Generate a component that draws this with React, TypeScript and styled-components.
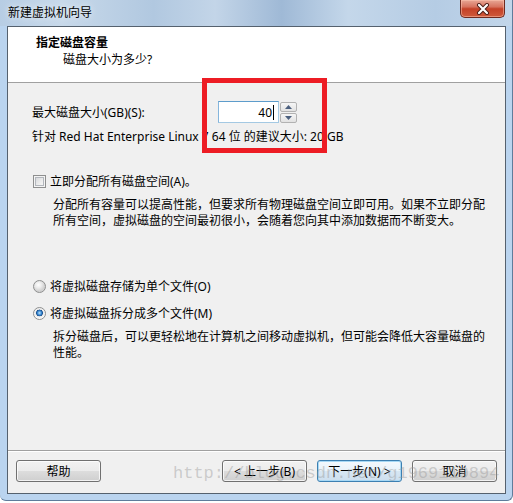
import React from "react";
import styled, { createGlobalStyle } from "styled-components";

const FONT = `"Noto Sans", "Noto Sans CJK SC", sans-serif`;

const Global = createGlobalStyle`
  html, body { margin: 0; padding: 0; background: #ffffff; }
  body { font-family: ${FONT}; font-size: 12px; color: #000; }
`;

const Window = styled.div`
  width: 513px;
  height: 501px;
  box-sizing: border-box;
  display: flex;
  flex-direction: column;
  padding: 0 6px 6px 7px;
  border-right: 1px solid #5f7c9b;
  border-bottom: 1px solid #5f7c9b;
  border-radius: 0 0 6px 6px;
  background:
    linear-gradient(to right, #b7cde4 0%, #c8d9ea 12%, #b1c8e0 30%, #c3d5e8 42%, #9fb9d6 55%, #c4d7ea 68%, #b5cce4 85%, #c2d6ea 100%) top left / 100% 26px no-repeat,
    #bad4ef;
`;

const TitleBar = styled.div`
  height: 26px;
  display: flex;
  align-items: flex-start;
  justify-content: space-between;
`;

const TitleText = styled.div`
  line-height: 26px;
  padding-left: 1px;
  font-size: 12px;
  color: #000;
  text-shadow: 0 0 6px rgba(255, 255, 255, 0.9);
`;

const CloseButton = styled.div`
  width: 45px;
  height: 18px;
  margin-right: 1px;
  box-sizing: border-box;
  border: 1px solid #6e2a20;
  border-top: none;
  border-radius: 0 0 5px 5px;
  background: linear-gradient(#e8a795 0%, #d7735f 40%, #c44127 52%, #cf5a3c 100%);
  box-shadow: inset 0 0 0 1px rgba(255, 200, 180, 0.5);
  display: flex;
  align-items: center;
  justify-content: center;
`;

const Client = styled.div`
  flex: 1;
  display: flex;
  flex-direction: column;
  border: 1px solid #55616e;
  background: #f0f0f0;
  position: relative;
`;

const Header = styled.div`
  height: 56px;
  box-sizing: border-box;
  border-bottom: 1px solid #a0a0a0;
  background: #ffffff;
  padding: 7px 0 0 28px;
`;

const HeaderTitle = styled.div`
  font-weight: bold;
  line-height: 17px;
`;

const HeaderSub = styled.div`
  line-height: 17px;
  padding-left: 27px;
`;

const Body = styled.div`
  flex: 1;
  position: relative;
  display: flex;
  flex-direction: column;
  padding: 18px 0 0 24px;
`;

const SizeRow = styled.div`
  display: flex;
  align-items: center;
  height: 22px;
`;

const SizeLabel = styled.div`
  width: 186px;
  line-height: 17px;
`;

const NumberBox = styled.div`
  width: 61px;
  height: 22px;
  box-sizing: border-box;
  border: 1px solid #a4c9e3;
  border-top-color: #5d9ccb;
  border-left-color: #84b5dc;
  background: #fff;
  display: flex;
  align-items: center;
  justify-content: flex-end;
  padding-right: 4px;
  line-height: 17px;
`;

const Caret = styled.span`
  display: inline-block;
  width: 1px;
  height: 15px;
  background: #000;
  margin-left: 1px;
`;

const Spinner = styled.div`
  margin-left: 1px;
  width: 17px;
  height: 21px;
  display: flex;
  flex-direction: column;
  gap: 1px;
  align-self: flex-end;
`;

const SpinButton = styled.div`
  flex: 1;
  box-sizing: border-box;
  border: 1px solid #b2b2b2;
  border-radius: 2px;
  background: linear-gradient(#f6f6f6, #e2e2e2);
  display: flex;
  align-items: center;
  justify-content: center;
`;

const Text = styled.div<{ $top: number }>`
  margin-top: ${(p) => p.$top}px;
  line-height: 17px;
  white-space: nowrap;
`;

const OptionRow = styled.label<{ $top: number }>`
  margin-top: ${(p) => p.$top}px;
  display: flex;
  align-items: center;
  gap: 4px;
  line-height: 17px;
  padding-left: 1px;
`;

const CheckBox = styled.span`
  width: 13px;
  height: 13px;
  box-sizing: border-box;
  border: 1px solid #8e8f8f;
  background: linear-gradient(135deg, #cfd2d6 0%, #eeeeee 60%, #fbfbfb 100%);
  box-shadow: inset 0 0 0 1px #f4f4f4, inset 0 0 0 2px #b3b7bd;
`;

const Radio = styled.span<{ $checked?: boolean }>`
  width: 13px;
  height: 13px;
  box-sizing: border-box;
  border-radius: 50%;
  border: 1px solid #8e8f8f;
  background: ${(p) =>
    p.$checked
      ? "radial-gradient(circle at 50% 45%, #c4e6fb 0, #3a8ad3 2px, #1b4f8c 3.2px, #e6e6e6 3.6px, #ffffff 6px)"
      : "radial-gradient(circle at 40% 35%, #ffffff 0, #ececec 3px, #d2d2d2 6px)"};
`;

const Desc = styled.div<{ $top: number }>`
  margin-top: ${(p) => p.$top}px;
  padding-left: 21px;
  line-height: 15.5px;
  white-space: nowrap;
`;

const Highlight = styled.div`
  position: absolute;
  left: 194px;
  top: -5px;
  width: 125px;
  height: 75px;
  box-sizing: border-box;
  border: 5px solid #ed1c24;
  z-index: 2;
`;

const Footer = styled.div`
  position: relative;
  border-top: 1px solid #a0a0a0;
  box-shadow: inset 0 1px 0 #ffffff;
  padding: 9px 8px 11px 8px;
  display: flex;
  gap: 10px;
`;

const Button = styled.div<{ $focused?: boolean; $push?: boolean }>`
  width: 85px;
  height: 22px;
  box-sizing: border-box;
  border: 1px solid ${(p) => (p.$focused ? "#3c7fb1" : "#707070")};
  border-radius: 3px;
  background: ${(p) =>
    p.$focused
      ? "linear-gradient(#f4f9fd 0%, #e8f2fa 50%, #d8e7f3 50%, #cddfee 100%)"
      : "linear-gradient(#f2f2f2 0%, #ebebeb 50%, #dddddd 50%, #cfcfcf 100%)"};
  box-shadow: inset 0 0 0 1px ${(p) => (p.$focused ? "#a6d8f5" : "rgba(255,255,255,0.75)")};
  display: flex;
  align-items: center;
  justify-content: center;
  line-height: 17px;
  margin-right: ${(p) => (p.$push ? "auto" : "0")};
`;

const Watermark = styled.div`
  position: absolute;
  left: 165px;
  top: 13px;
  font-family: "Liberation Mono", monospace;
  font-size: 17px;
  line-height: 20px;
  color: rgba(150, 150, 150, 0.42);
  pointer-events: none;
  white-space: nowrap;
  z-index: 3;
`;

export default function App() {
  return (
    <>
      <Global />
      <Window>
        <TitleBar>
          <TitleText>新建虚拟机向导</TitleText>
          <CloseButton>
            <svg width="14" height="12" viewBox="0 0 14 12">
              <path d="M3 2 L11 10 M11 2 L3 10" stroke="#4a1c16" strokeWidth="4" strokeLinecap="round" />
              <path d="M3 2 L11 10 M11 2 L3 10" stroke="#ffffff" strokeWidth="2.2" strokeLinecap="round" />
            </svg>
          </CloseButton>
        </TitleBar>
        <Client>
          <Header>
            <HeaderTitle>指定磁盘容量</HeaderTitle>
            <HeaderSub>磁盘大小为多少?</HeaderSub>
          </Header>
          <Body>
            <Highlight />
            <SizeRow>
              <SizeLabel>最大磁盘大小(GB)(S):</SizeLabel>
              <NumberBox>
                40
                <Caret />
              </NumberBox>
              <Spinner>
                <SpinButton>
                  <svg width="7" height="4" viewBox="0 0 7 4">
                    <polygon points="0,4 7,4 3.5,0" fill="#4c607f" />
                  </svg>
                </SpinButton>
                <SpinButton>
                  <svg width="7" height="4" viewBox="0 0 7 4">
                    <polygon points="0,0 7,0 3.5,4" fill="#4c607f" />
                  </svg>
                </SpinButton>
              </Spinner>
            </SizeRow>
            <Text $top={5}>针对 Red Hat Enterprise Linux 7 64 位 的建议大小: 20 GB</Text>
            <OptionRow $top={28}>
              <CheckBox />
              立即分配所有磁盘空间(A)。
            </OptionRow>
            <Desc $top={7}>
              分配所有容量可以提高性能，但要求所有物理磁盘空间立即可用。如果不立即分配
              <br />
              所有空间，虚拟磁盘的空间最初很小，会随着您向其中添加数据而不断变大。
            </Desc>
            <OptionRow $top={50}>
              <Radio />
              将虚拟磁盘存储为单个文件(O)
            </OptionRow>
            <OptionRow $top={10}>
              <Radio $checked />
              将虚拟磁盘拆分成多个文件(M)
            </OptionRow>
            <Desc $top={7}>
              拆分磁盘后，可以更轻松地在计算机之间移动虚拟机，但可能会降低大容量磁盘的
              <br />
              性能。
            </Desc>
          </Body>
          <Footer>
            <Button $push>帮助</Button>
            <Button>&lt; 上一步(B)</Button>
            <Button $focused>下一步(N) &gt;</Button>
            <Button>取消</Button>
            <Watermark>http://blog.csdn.net/g1969119894</Watermark>
          </Footer>
        </Client>
      </Window>
    </>
  );
}
